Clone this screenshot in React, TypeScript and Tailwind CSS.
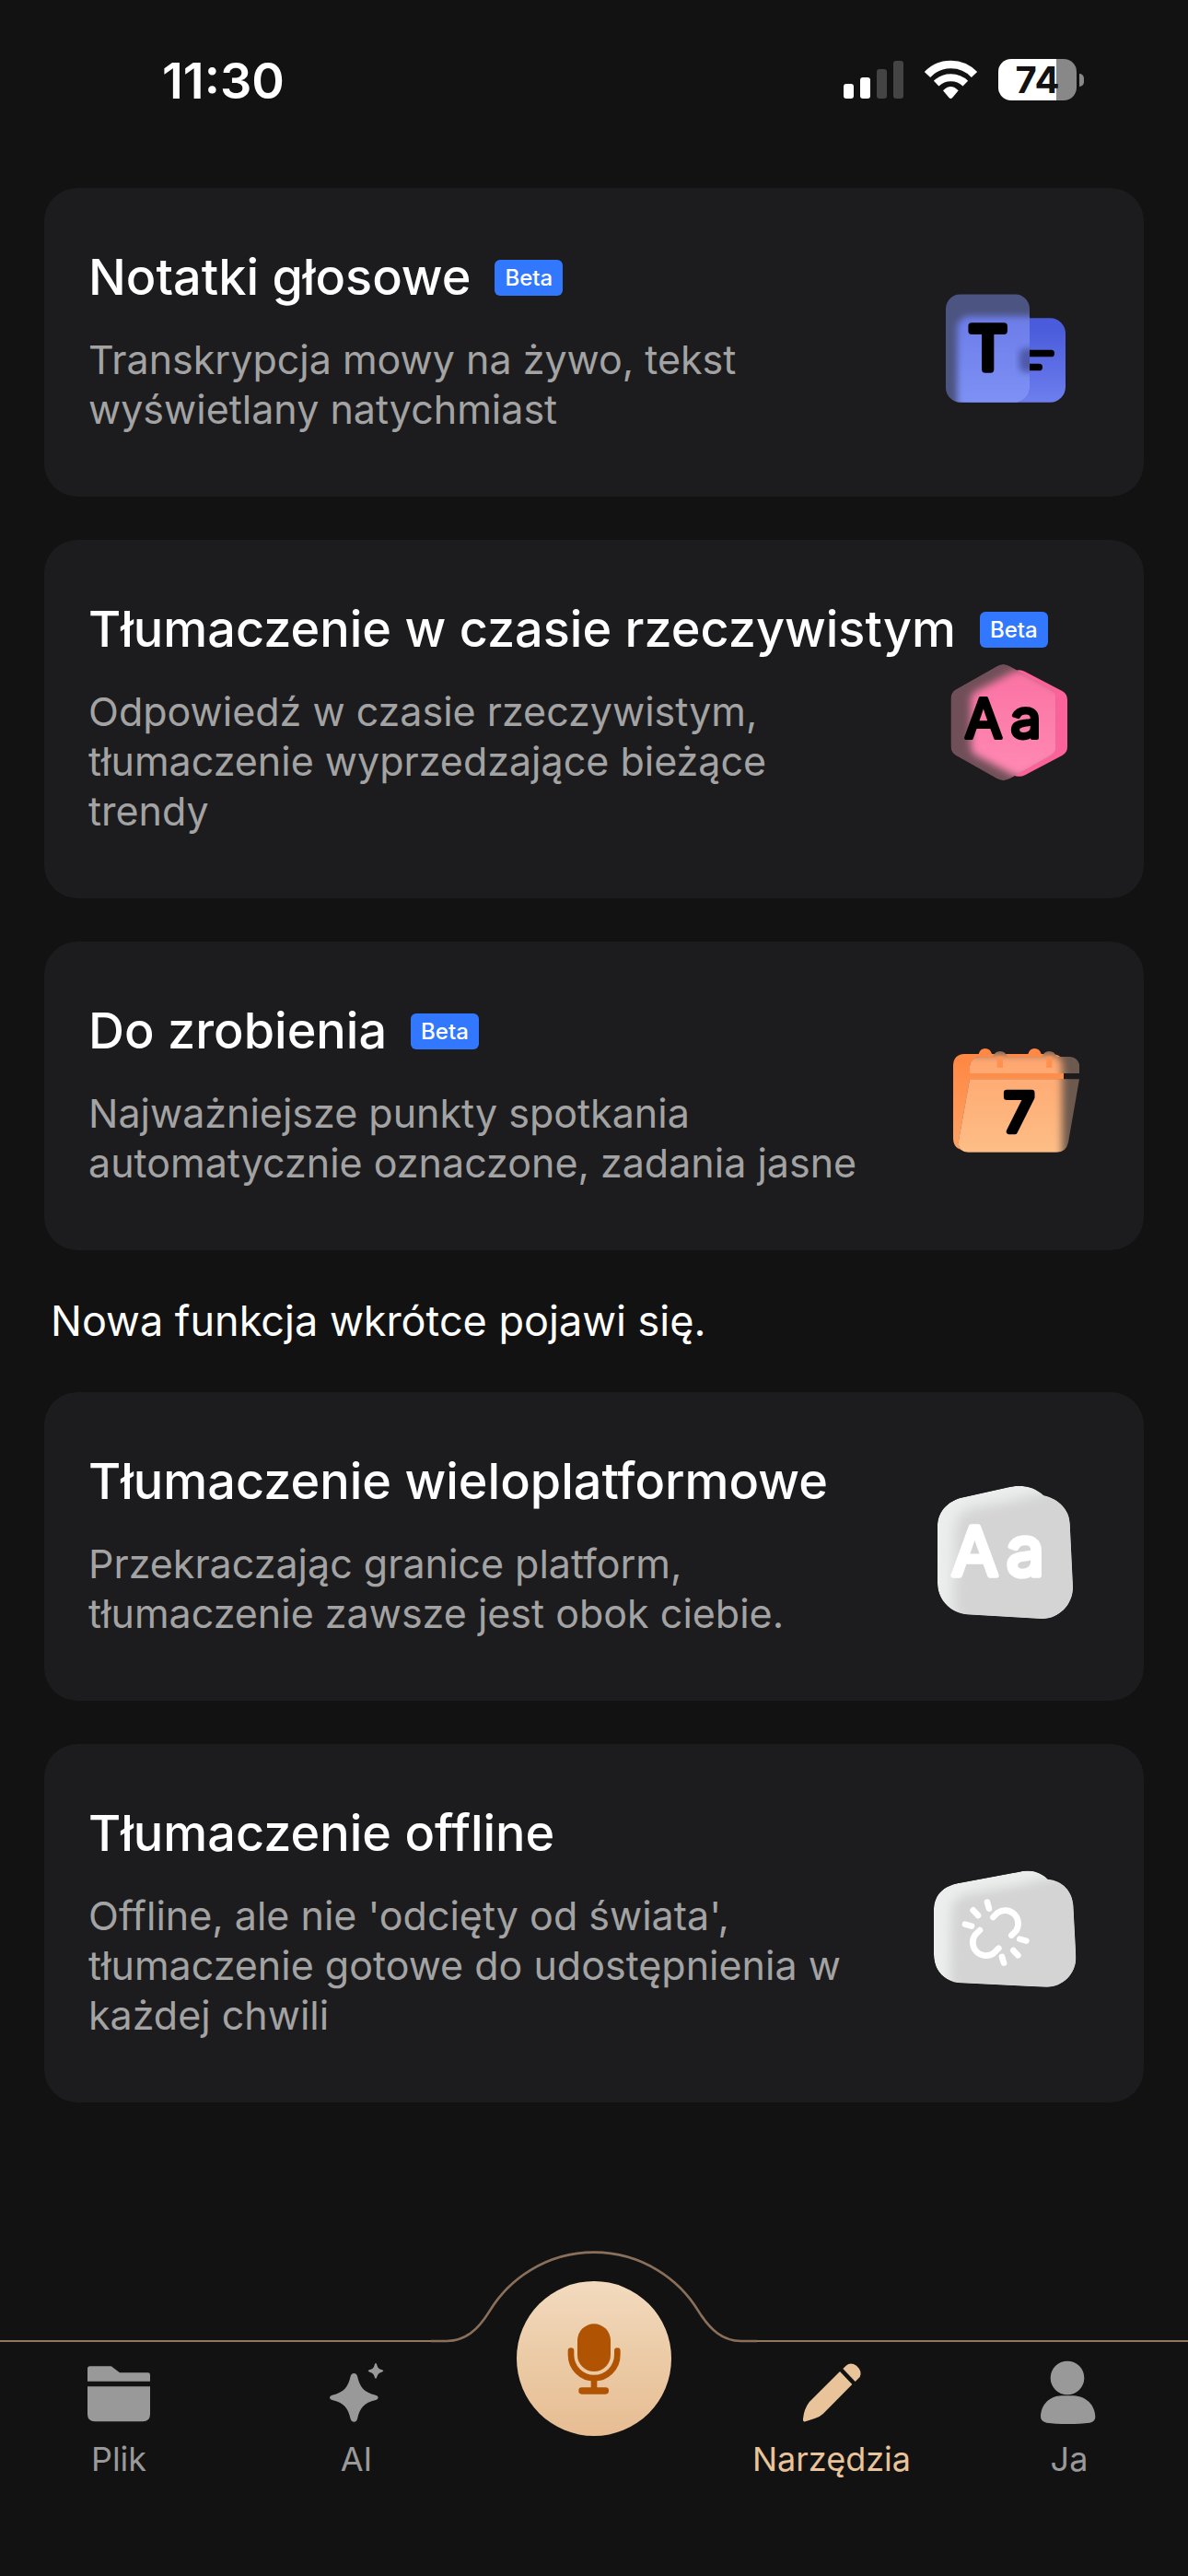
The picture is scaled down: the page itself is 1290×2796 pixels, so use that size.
import type { ReactNode } from "react";

const iconClass = "h-[160px] w-[160px] shrink-0";

function VoiceNotesIcon() {
  return (
    <svg className={iconClass} viewBox="36 -30 480 480" aria-hidden="true">
      <defs>
        <linearGradient id="vnBack" x1="0" y1="0" x2="0" y2="1">
          <stop offset="0.1" stopColor="#4a5bdb" />
          <stop offset="1" stopColor="#6d7eee" />
        </linearGradient>
        <linearGradient id="vnGlow" x1="0" y1="0" x2="0" y2="1">
          <stop offset="0" stopColor="#6c7ce8" />
          <stop offset="1" stopColor="#8094f7" />
        </linearGradient>
        <clipPath id="vnClip">
          <rect x="81" y="58" width="273" height="352" rx="48" />
        </clipPath>
        <filter id="vnBlur" x="-20%" y="-20%" width="140%" height="140%">
          <feGaussianBlur stdDeviation="11" />
        </filter>
      </defs>
      <rect x="118" y="136" width="353" height="274" rx="50" fill="url(#vnBack)" />
      <rect x="340" y="239" width="95" height="23" rx="11" fill="#000" />
      <rect x="340" y="284" width="56" height="23" rx="11" fill="#000" />
      <g clipPath="url(#vnClip)">
        <rect x="81" y="58" width="273" height="352" fill="#4c5482" />
        <rect x="118" y="130" width="400" height="330" rx="40" fill="url(#vnGlow)" filter="url(#vnBlur)" />
        <rect x="320" y="234" width="60" height="78" rx="20" fill="#3d468e" opacity="0.7" filter="url(#vnBlur)" />
      </g>
      <text x="218" y="302" textAnchor="middle" fontFamily="Inter" fontWeight="400" fontSize="192" stroke="#000" strokeWidth="22" strokeLinejoin="round">
        T
      </text>
    </svg>
  );
}

const hexFront =
  "M248 69 Q268 57 289 69 L423 145 Q440 155 440 175 V330 Q440 350 423 360 L289 436 Q268 447 248 436 L114 360 Q97 350 97 330 V175 Q97 155 114 145 Z";
const hexBack =
  "M301 87 Q320 77 339 87 L460 150 Q477 160 477 178 V332 Q477 350 460 360 L339 424 Q320 433 301 424 L180 360 Q163 350 163 332 V178 Q163 160 180 150 Z";

function RealtimeIcon() {
  return (
    <svg className={iconClass} viewBox="36 -3 480 480" aria-hidden="true">
      <defs>
        <linearGradient id="rtGlow" x1="0" y1="0" x2="0" y2="1">
          <stop offset="0" stopColor="#fb72a3" />
          <stop offset="1" stopColor="#ff8ab3" />
        </linearGradient>
        <clipPath id="rtClip">
          <path d={hexFront} />
        </clipPath>
        <filter id="rtBlur" x="-20%" y="-20%" width="140%" height="140%">
          <feGaussianBlur stdDeviation="13" />
        </filter>
      </defs>
      <path d={hexBack} fill="#fc629a" />
      <g clipPath="url(#rtClip)">
        <path d={hexFront} fill="#704f58" />
        <path d={hexBack} fill="url(#rtGlow)" filter="url(#rtBlur)" />
      </g>
      <g fontFamily="Inter" fontWeight="400" fontSize="178" stroke="#000" strokeWidth="12" strokeLinejoin="round" textAnchor="middle">
        <text x="204" y="302">A</text>
        <text x="342" y="302">a</text>
      </g>
    </svg>
  );
}

function TodoIcon() {
  return (
    <svg className={iconClass} viewBox="6 -36 480 480" aria-hidden="true">
      <defs>
        <linearGradient id="tdBack" x1="0" y1="0" x2="0" y2="1">
          <stop offset="0.1" stopColor="#ff8844" />
          <stop offset="1" stopColor="#ffa264" />
        </linearGradient>
        <linearGradient id="tdGlow" x1="0" y1="0" x2="0" y2="1">
          <stop offset="0" stopColor="#ffa56f" />
          <stop offset="1" stopColor="#fdc189" />
        </linearGradient>
        <clipPath id="tdClip">
          <path d="M129 135 V112 Q131 84 161 81 H205 Q211 63 228 63 Q245 63 251 81 H365 Q371 63 388 63 Q405 63 412 81 H455 Q484 84 487 112 V135 Z" />
          <path d="M129 154 H486 L450 360 Q443 392 412 392 H124 Q92 390 92 360 Z" />
        </clipPath>
        <filter id="tdBlur" x="-20%" y="-20%" width="140%" height="140%">
          <feGaussianBlur stdDeviation="13" />
        </filter>
      </defs>
      <path d="M111 72 H158 Q163 54 179 54 Q196 54 201 72 H319 Q324 54 340 54 Q357 54 362 72 H399 Q435 75 435 108 V349 Q433 385 399 385 H111 Q77 383 75 349 V108 Q77 74 111 72 Z" fill="url(#tdBack)" />
      <g clipPath="url(#tdClip)">
        <rect x="80" y="60" width="420" height="340" fill="#6d594e" />
        <rect x="20" y="74" width="410" height="360" rx="34" fill="url(#tdGlow)" filter="url(#tdBlur)" />
      </g>
      <rect x="218" y="80" width="19" height="37" fill="#ff9150" />
      <rect x="379" y="80" width="18" height="37" fill="#ff9150" />
      <text x="290" y="325" textAnchor="middle" fontFamily="Inter" fontWeight="400" fontSize="172" stroke="#000" strokeWidth="20" strokeLinejoin="round">
        7
      </text>
    </svg>
  );
}

const platformShape =
  "M54 200 C54 150 88 119 130 107 L285 73 C325 62 368 69 400 100 C450 112 484 147 485 192 L495 398 C495 455 450 500 395 501 L150 487 C95 481 54 440 54 385 Z";

function PlatformIcon() {
  return (
    <svg className={iconClass} viewBox="36 21 480 480" aria-hidden="true">
      <defs>
        <clipPath id="pfClip">
          <path d={platformShape} />
        </clipPath>
        <filter id="pfBlur" x="-20%" y="-20%" width="140%" height="140%">
          <feGaussianBlur stdDeviation="20" />
        </filter>
      </defs>
      <g clipPath="url(#pfClip)">
        <path d={platformShape} fill="#eceeee" />
        <path d="M110 220 Q112 150 170 138 L300 115 Q400 80 560 60 V560 H200 Q100 530 105 440 Z" fill="#d4d4d4" filter="url(#pfBlur)" />
      </g>
      <g fontFamily="Inter" fontWeight="400" fontSize="220" fill="#fff" stroke="#fff" strokeWidth="16" strokeLinejoin="round" textAnchor="middle">
        <text x="176" y="359">A</text>
        <text x="340" y="359">a</text>
      </g>
    </svg>
  );
}

const offlineShape =
  "M72 185 C74 140 105 113 148 104 L350 66 C385 58 418 65 443 90 C492 95 523 130 526 175 L535 345 C534 400 492 440 440 441 L150 427 C103 420 72 385 72 335 Z";

function OfflineIcon() {
  return (
    <svg className={iconClass} viewBox="66 -11 480 480" aria-hidden="true">
      <defs>
        <clipPath id="ofClip">
          <path d={offlineShape} />
        </clipPath>
        <filter id="ofBlur" x="-20%" y="-20%" width="140%" height="140%">
          <feGaussianBlur stdDeviation="18" />
        </filter>
      </defs>
      <g clipPath="url(#ofClip)">
        <path d={offlineShape} fill="#eceeee" />
        <path d="M128 200 Q130 145 190 135 L350 108 Q440 80 600 60 V500 H220 Q120 480 125 390 Z" fill="#d4d4d4" filter="url(#ofBlur)" />
      </g>
      <g fill="none" stroke="#fff" strokeWidth="20" strokeLinecap="round">
        <path d="M265 214 L280 199 A43 43 0 0 1 340 258 L325 273" />
        <path d="M222 256 L207 271 A43 43 0 0 0 267 331 L283 315" />
        <path d="M246 165 L252 186 M200 191 L216 208 M174 237 L195 243 M352 285 L373 291 M331 322 L346 338 M294 343 L300 363" />
      </g>
    </svg>
  );
}

function FolderIcon() {
  return (
    <svg className="h-[72px] w-[72px]" viewBox="99 60 216 216" fill="currentColor" aria-hidden="true">
      <path d="M105 90 Q105 82 113 82 H179 Q184 82 188 86 L210 103 H302 Q309 103 309 110 V131 H105 Z" />
      <path d="M105 148 H309 V238 Q309 262 285 262 H129 Q105 262 105 238 Z" />
    </svg>
  );
}

function SparkIcon() {
  return (
    <svg className="h-[72px] w-[72px]" viewBox="873 60 216 216" fill="currentColor" aria-hidden="true">
      <path d="M973 105 Q981 105 984 114 C992 150 1005 167 1044 176 Q1052 178 1052 184 Q1052 190 1044 192 C1005 201 992 218 984 254 Q981 263 973 263 Q965 263 962 254 C954 218 941 201 902 192 Q894 190 894 184 Q894 178 902 176 C941 167 954 150 962 114 Q965 105 973 105 Z" />
      <path d="M1044 72 Q1047 72 1048 78 Q1051 91 1063 93 Q1069 95 1069 97 Q1069 99 1063 101 Q1051 104 1048 116 Q1047 122 1044 122 Q1041 122 1040 116 Q1037 104 1025 101 Q1019 99 1019 97 Q1019 95 1025 93 Q1037 91 1040 78 Q1041 72 1044 72 Z" />
    </svg>
  );
}

function PencilIcon() {
  return (
    <svg className="h-[72px] w-[72px]" viewBox="231 60 216 216" fill="currentColor" aria-hidden="true">
      <path d="M366 99 L406 141 L312 236 Q302 246 284 252 L254 262 Q244 264 246 253 Q249 222 266 199 Z" />
      <path d="M376 90 L386 80 Q401 67 420 80 Q440 98 431 117 L416 132 Z" />
    </svg>
  );
}

function PersonIcon() {
  return (
    <svg className="h-[72px] w-[72px]" viewBox="1005 60 216 216" fill="currentColor" aria-hidden="true">
      <circle cx="1107" cy="120" r="55" />
      <path d="M1020 244 C1022 206 1050 179 1088 178 H1128 C1168 180 1197 208 1198 246 Q1199 262 1180 266 Q1150 270 1108 270 Q1068 270 1039 266 Q1019 262 1020 244 Z" />
    </svg>
  );
}

function MicIcon() {
  return (
    <svg className="h-full w-full" viewBox="363 168 504 504" aria-hidden="true">
      <g fill="#b05403">
        <rect x="561" y="307" width="108" height="155" rx="54" />
        <rect x="605" y="480" width="20" height="40" />
        <rect x="565" y="514" width="98" height="22" rx="10" />
        <path d="M540 395 V408 A75 75 0 0 0 691 408 V395" fill="none" stroke="#b05403" strokeWidth="20" strokeLinecap="round" />
      </g>
    </svg>
  );
}

function StatusBar() {
  return (
    <header className="flex items-start justify-between pt-[60px] pr-[113px] pl-[176px]">
      <time className="text-[54px] leading-[56px] font-semibold">11:30</time>
      <div className="flex items-center pt-1">
        <svg className="h-[45px] w-[65px]" viewBox="0 0 65 45" aria-label="Sygnał">
          <rect x="0" y="27" width="11" height="16" rx="3" fill="#fff" />
          <rect x="18" y="20" width="11" height="23" rx="3" fill="#fff" />
          <rect x="36" y="11" width="11" height="32" rx="3" fill="#444" />
          <rect x="54" y="2" width="11" height="41" rx="3" fill="#444" />
        </svg>
        <svg className="ml-[23px] h-[45px] w-[58px]" viewBox="432 72 174 135" aria-label="Wi-Fi">
          <path d="M441 123 A105 105 0 0 1 594 123" fill="none" stroke="#fff" strokeWidth="26" />
          <path d="M470 152 A68 68 0 0 1 565 152" fill="none" stroke="#fff" strokeWidth="24" />
          <path d="M492 175 Q517 149 542 175 L522 199 Q517 203 512 199 Z" fill="#fff" />
        </svg>
        <div className="ml-[22px] flex h-[45px] w-[85px] items-center justify-center rounded-[14px] bg-linear-to-r from-white from-74% to-[#888] to-74% text-[40px] leading-[45px] font-bold text-[#121212]">
          74
        </div>
        <div className="ml-[3px] h-[14px] w-[5px] rounded-r-full bg-[#888]" />
      </div>
    </header>
  );
}

type CardProps = { title: string; text: string; icon: ReactNode; beta?: boolean };

function ToolCard({ title, text, icon, beta }: CardProps) {
  return (
    <article className="flex items-center gap-11 rounded-[36px] bg-[#1c1c1e] pt-[65px] pr-[70px] pb-[68px] pl-12">
      <div className="min-w-0 flex-1">
        <h2 className="flex items-center gap-[26px] text-[54px] leading-[64px] font-medium whitespace-nowrap">
          {title}
          {beta && (
            <span className="rounded-md bg-[#3178ff] px-[11px] text-[24px] leading-[39px] font-medium">Beta</span>
          )}
        </h2>
        <p className="mt-[30px] text-[43px] leading-[54px] text-[#a3a3a3]">{text}</p>
      </div>
      <div className="-my-8 shrink-0">{icon}</div>
    </article>
  );
}

function Tab({ label, icon, active }: { label: string; icon: ReactNode; active?: boolean }) {
  return (
    <a
      href="#"
      aria-current={active ? "page" : undefined}
      className={
        active
          ? "flex flex-col items-center gap-3 text-[#e9c399]"
          : "flex flex-col items-center gap-3 text-[#999999]"
      }
    >
      {icon}
      <span className="text-[36px] leading-[48px]">{label}</span>
    </a>
  );
}

function TabBar() {
  return (
    <nav className="relative mt-auto pb-[103px]">
      <div className="flex items-end">
        <div className="mb-px h-[2px] flex-1 bg-[#8f7a60]" />
        <svg className="h-[103px] w-[354px]" viewBox="84 60 1062 309" fill="none" aria-hidden="true">
          <path d="M84 363 H135 C195 363 236 328 275 265 A398 398 0 0 1 955 265 C994 328 1035 363 1095 363 H1146" stroke="#8a705a" strokeWidth="8" />
        </svg>
        <div className="mb-px h-[2px] flex-1 bg-[#8f7a60]" />
      </div>
      <div className="grid grid-cols-5 pt-[18px]">
        <Tab label="Plik" icon={<FolderIcon />} />
        <Tab label="AI" icon={<SparkIcon />} />
        <span />
        <Tab label="Narzędzia" icon={<PencilIcon />} active />
        <Tab label="Ja" icon={<PersonIcon />} />
      </div>
      <button
        type="button"
        aria-label="Nagraj"
        className="absolute top-9 left-1/2 h-[168px] w-[168px] -translate-x-1/2 rounded-full bg-linear-to-b from-[#f3dabf] via-[#ebcba6] to-[#e7bd93]"
      >
        <MicIcon />
      </button>
    </nav>
  );
}

export default function App() {
  return (
    <div className="flex min-h-screen flex-col bg-[#121212] font-['Inter','Liberation_Sans',sans-serif] text-white">
      <StatusBar />
      <main className="flex flex-col px-12 pt-[88px] pb-10">
        <div className="flex flex-col gap-[47px]">
          <ToolCard beta title="Notatki głosowe" text="Transkrypcja mowy na żywo, tekst wyświetlany natychmiast" icon={<VoiceNotesIcon />} />
          <ToolCard beta title="Tłumaczenie w czasie rzeczywistym" text="Odpowiedź w czasie rzeczywistym, tłumaczenie wyprzedzające bieżące trendy" icon={<RealtimeIcon />} />
          <ToolCard beta title="Do zrobienia" text="Najważniejsze punkty spotkania automatycznie oznaczone, zadania jasne" icon={<TodoIcon />} />
        </div>
        <p className="my-[47px] px-[7px] text-[45px] leading-[60px]">Nowa funkcja wkrótce pojawi się.</p>
        <div className="flex flex-col gap-[47px]">
          <ToolCard title="Tłumaczenie wieloplatformowe" text="Przekraczając granice platform, tłumaczenie zawsze jest obok ciebie." icon={<PlatformIcon />} />
          <ToolCard title="Tłumaczenie offline" text="Offline, ale nie 'odcięty od świata', tłumaczenie gotowe do udostępnienia w każdej chwili" icon={<OfflineIcon />} />
        </div>
      </main>
      <TabBar />
    </div>
  );
}
